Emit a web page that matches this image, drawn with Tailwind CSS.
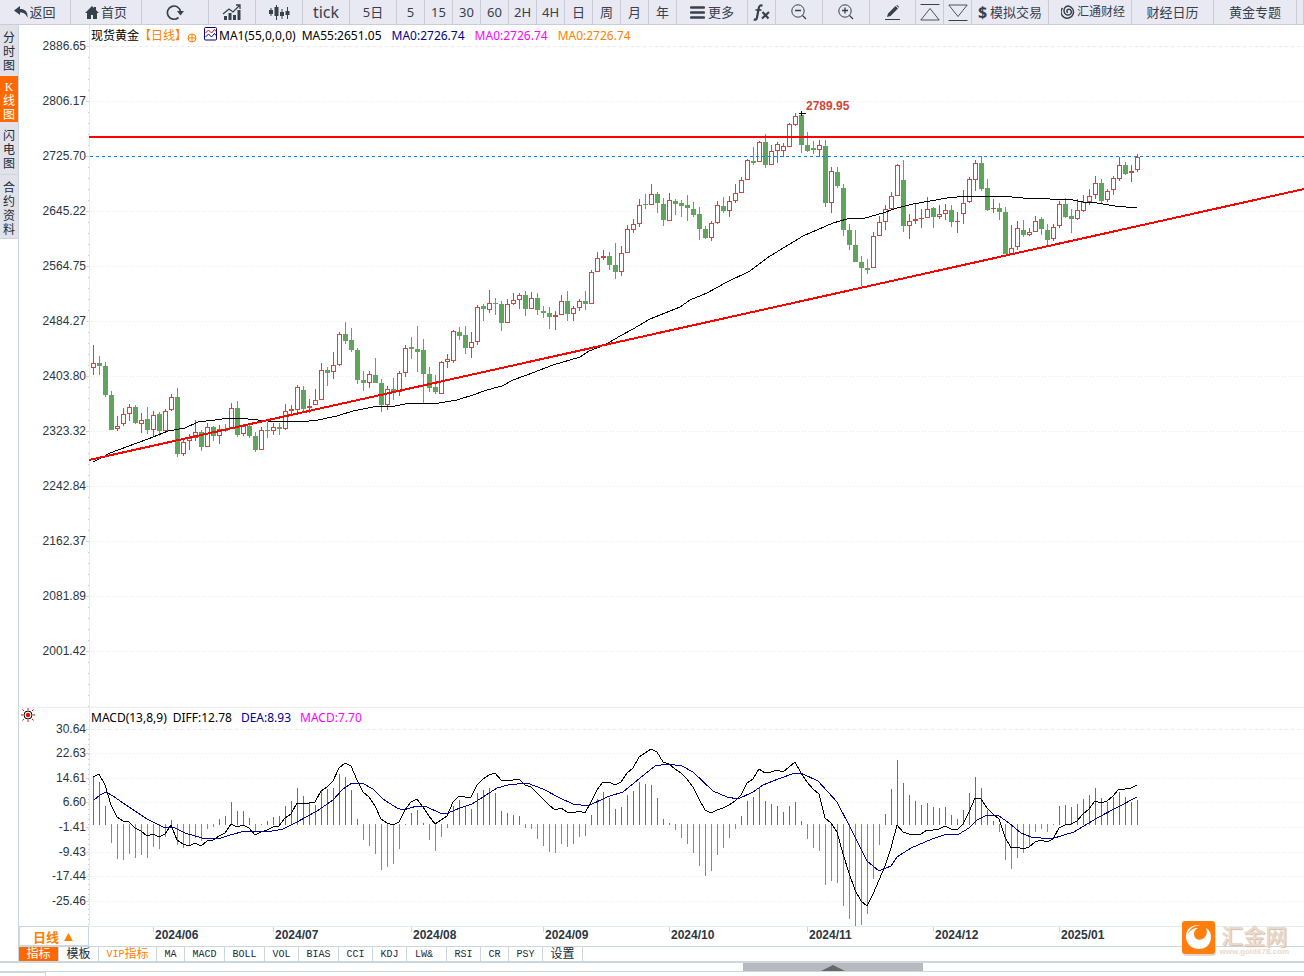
<!DOCTYPE html>
<html lang="zh-CN">
<head>
<meta charset="utf-8">
<meta name="viewport" content="width=device-width, initial-scale=1">
<title>现货黄金 日线</title>
<script src="https://cdn.jsdelivr.net/npm/@tailwindcss/browser@4"></script>
</head>
<body class="flex h-screen min-h-[600px] flex-col overflow-hidden bg-white font-['Noto_Sans','Noto_Sans_CJK_SC',sans-serif] text-[#36414d]">

<nav class="flex h-[25px] shrink-0 overflow-hidden border-b border-[#cbccd8] bg-[#e9e9f3] text-[13px] leading-6 whitespace-nowrap *:flex *:shrink-0 *:items-center *:justify-center *:border-r *:border-[#cbccd8]">
  <button class="w-[71px] gap-px">
    <svg width="14" height="12" viewBox="0 0 14 12"><path d="M0 4.500 6 0v3c5 0 8 2.500 7.500 9C12 8 10 6.500 6 6.500V9z" fill="#36414d"/></svg>返回</button>
  <button class="w-[71px] gap-[2px]">
    <svg width="14" height="13" viewBox="0 0 14 13"><path d="M7 0 0 7h2v6h4V9h2v4h4V7h2l-3-3V1H9v1z" fill="#36414d"/></svg>首页</button>
  <button class="w-[67px]" aria-label="刷新">
    <svg width="18" height="17" viewBox="0 0 18 17" fill="none"><path d="M12.500 13.500A6.600 6.600 0 1 1 14.600 8" stroke="#36414d" stroke-width="1.700"/><path d="M11 7h7l-3.500 4.500z" fill="#36414d"/></svg></button>
  <button class="w-[47px]" aria-label="走势图">
    <svg width="20" height="16" viewBox="0 0 20 16"><path d="M2 12h3v4H2zm4.500-3h3v7h-3zM11 11h3v5h-3zm4.500-5h3v10h-3z" fill="#36414d"/><path d="m1 10 6-5 4 3 7-7m-4 0h4v4" fill="none" stroke="#36414d" stroke-width="1.300"/></svg></button>
  <button class="w-[47px]" aria-label="蜡烛图">
    <svg width="21" height="15" viewBox="0 0 21 15" fill="#36414d"><path d="M0 5h4v4H0zm1.500-2h1v8h-1zM5.500 2h4v9h-4zM7 0h1v15H7zM11 7h4v4h-4zm1.500-3h1v10h-1zM16.500 6h4v4h-4zM18 2h1v12h-1z"/></svg></button>
  <button class="w-[47px] text-base">tick</button>
  <button class="w-[47px]">5日</button>
  <button class="w-7">5</button>
  <button class="w-7">15</button>
  <button class="w-7">30</button>
  <button class="w-7">60</button>
  <button class="w-7">2H</button>
  <button class="w-7">4H</button>
  <button class="w-7">日</button>
  <button class="w-7">周</button>
  <button class="w-7">月</button>
  <button class="w-7">年</button>
  <button class="w-[71px] gap-[3px]">
    <svg width="15" height="13" viewBox="0 0 15 13"><path d="M1 1.500h13M1 6.500h13M1 11.500h13" stroke="#36414d" stroke-width="2.400" stroke-linecap="round"/></svg>更多</button>
  <button class="w-7" aria-label="公式">
    <svg width="18" height="17" viewBox="0 0 18 17" fill="none" stroke="#36414d"><path d="M9.500 1.800C7.500.8 6.300 1.500 5.800 4L4 13.500C3.600 15.600 2.500 16 .8 15.400" stroke-width="2.200"/><path d="M2.500 6h6" stroke-width="1.600"/><path d="m9.500 8 6 6.500m.5-6.500-7 6.500" stroke-width="2.200"/></svg></button>
  <button class="w-[47px]" aria-label="缩小">
    <svg width="16" height="16" viewBox="0 0 16 16" fill="none" stroke="#36414d"><circle cx="7" cy="7" r="6.200"/><path d="M4 6.500h6m1.500 5 3.500 3.500" stroke-width="1.300"/></svg></button>
  <button class="w-[47px]" aria-label="放大">
    <svg width="16" height="16" viewBox="0 0 16 16" fill="none" stroke="#36414d"><circle cx="7" cy="7" r="6.200"/><path d="M4 6.500h6m-3-3v6m4.500 2 3.500 3.500" stroke-width="1.300"/></svg></button>
  <button class="w-[46px]" aria-label="画线">
    <svg width="16" height="15" viewBox="0 0 16 15" fill="#36414d"><path d="m2 12 1-3.500L10.500 1l2.500 2.500L5.500 11zM11.200.4l1-.4L14 1.800l-.4 1z"/><path d="M0 14h15v1H0z"/></svg></button>
  <button class="w-7" aria-label="主图">
    <svg width="20" height="17" viewBox="0 0 20 17" fill="none" stroke="#36414d"><path d="M.5.5h19"/><path d="M.8 16 10 4.500 19.200 16z" stroke-width=".9"/></svg></button>
  <button class="w-7" aria-label="副图">
    <svg width="20" height="17" viewBox="0 0 20 17" fill="none" stroke="#36414d"><path d="M.5 16.500h19"/><path d="M.8 1 10 12.500 19.200 1z" stroke-width=".9"/></svg></button>
  <button class="w-[77px] gap-[3px]"><span class="text-base font-bold">$</span>模拟交易</button>
  <button class="w-[83px] gap-[2px] pl-[6px] text-xs leading-6">
    <svg width="14" height="14" viewBox="0 0 14 14" fill="none" stroke="#36414d"><path d="M1.500 3A6.200 6.200 0 1 0 7.500.9C4 .8 2.500 4 3.200 7c.6 2.800 4 4 6 2.300 2.200-2 1-5.200-1.500-5-2 .2-2.500 2.500-.7 3.200" stroke-width="1.500"/></svg>汇通财经</button>
  <button class="w-[82px]">财经日历</button>
  <button class="w-[83px]">黄金专题</button>
  <span class="grow"></span>
</nav>

<main class="flex min-h-0 flex-1">
  <aside class="flex w-[19px] shrink-0 flex-col border-r border-[#ccd6de] text-xs leading-[14px] text-[#222b36]">
    <button class="flex h-[51px] flex-col items-center bg-[#e1e1ea] pt-[6px]"><span>分</span><span>时</span><span>图</span></button>
    <button class="flex h-[46px] flex-col items-center bg-[#ff6a00] pt-[4px] text-white"><span class="font-['Liberation_Serif',serif]">K</span><span>线</span><span>图</span></button>
    <button class="flex h-[53px] flex-col items-center border-b border-[#ccd6de] bg-[#e1e1ea] pt-[7px]"><span>闪</span><span>电</span><span>图</span></button>
    <button class="flex h-[64px] flex-col items-center border-b border-[#ccd6de] bg-[#e1e1ea] pt-[6px]"><span>合</span><span>约</span><span>资</span><span>料</span></button>
  </aside>

  <div class="flex min-w-0 flex-1 flex-col">
    <section class="relative min-h-0 flex-1" aria-label="K线图">
      <svg class="block h-full w-full font-['Liberation_Sans',sans-serif]"><g id="price" transform="translate(-19 -25)"></g></svg>
      <div class="absolute top-px left-[72px] flex h-5 items-center text-xs whitespace-nowrap text-black">
        <span>现货黄金</span>
        <span class="text-[#ff8000]">【日线】</span>
        <svg class="mt-[3px]" width="10" height="10" viewBox="0 0 10 10" fill="none" stroke="#ff8000"><circle cx="5" cy="5" r="4"/><path d="M1 5h8M5 1v8"/></svg>
        <svg class="mb-[4px] ml-[7px]" width="13" height="14" viewBox="0 0 13 14" fill="none"><rect x=".5" y=".5" width="12" height="12.500" rx="1" fill="#fff" stroke="#000080"/><path d="m1.500 6 3-3 3 3 3-3.500 1.500 2" stroke="#f00"/><path d="m1.500 10 3-3 3 3 3-3.500 1.500 2" stroke="#000080"/></svg>
        <span class="ml-[2px]">MA1(55,0,0,0)</span>
        <span class="ml-[6px]">MA55:2651.05</span>
        <span class="ml-[10px] text-[#000096]">MA0:2726.74</span>
        <span class="ml-[10px] text-[#ff00ff]">MA0:2726.74</span>
        <span class="ml-[10px] text-[#ff8000]">MA0:2726.74</span>
      </div>
    </section>

    <section class="relative h-[219px] shrink-0 border-t border-[#e9edf0]" aria-label="MACD">
      <svg class="block h-full w-full font-['Liberation_Sans',sans-serif]"><g id="macd" transform="translate(-19 -708)"></g></svg>
      <svg class="absolute top-0 left-[2px]" width="15" height="15" viewBox="0 0 15 15" fill="none"><circle cx="7" cy="7" r="4" stroke="#000"/><circle cx="7" cy="7" r="2.200" fill="#f00"/><path d="M7 0v2m0 10v2M0 7h2m10 0h2M1.500 1.500l1.500 1.500m8 8 1.500 1.500m0-11L11 3m-8 8-1.500 1.500" stroke="#f00"/></svg>
      <div class="absolute top-0 left-[72px] flex h-5 items-center text-xs whitespace-nowrap text-black">
        <span>MACD(13,8,9)</span>
        <span class="ml-[6px]">DIFF:12.78</span>
        <span class="ml-[9px] text-[#000096]">DEA:8.93</span>
        <span class="ml-[9px] text-[#ff00ff]">MACD:7.70</span>
      </div>
    </section>

    <div class="flex h-5 shrink-0">
      <button class="flex w-[70px] shrink-0 items-center justify-center gap-[5px] border border-[#ccd6de] pt-[2px] pr-[2px] text-[13px] font-bold leading-4 text-[#ff8000]">日线
        <svg width="9" height="8" viewBox="0 0 10 9"><path d="M5 0 10 9H0z" fill="#ff8000"/></svg></button>
      <svg class="block h-full min-w-0 flex-1 border-t border-[#e4ecf0] font-['Liberation_Sans',sans-serif]"><g id="dates" transform="translate(-89 -927)"></g></svg>
    </div>

    <div class="flex h-[15px] shrink-0 border-t border-[#ccd6de] font-['Liberation_Mono','Noto_Sans_CJK_SC',monospace] text-[10px] leading-[14px] whitespace-nowrap text-[#222b36] *:flex *:shrink-0 *:items-center *:justify-center *:border-r *:border-[#ccd6de] *:pt-[2px]">
      <button class="w-10 bg-[#ff6a00] text-xs leading-[14px] text-white">指标</button>
      <button class="w-10 text-xs leading-[14px]">模板</button>
      <button class="w-[58px] text-[#ff8000]">VIP<span class="text-xs leading-[14px]">指标</span></button>
      <button class="w-7">MA</button>
      <button class="w-10">MACD</button>
      <button class="w-10">BOLL</button>
      <button class="w-[34px]">VOL</button>
      <button class="w-10">BIAS</button>
      <button class="w-[34px]">CCI</button>
      <button class="w-[34px]">KDJ</button>
      <button class="w-10 pr-[5px]">LW&amp;</button>
      <button class="w-[34px]">RSI</button>
      <button class="w-7">CR</button>
      <button class="w-[34px]">PSY</button>
      <button class="w-10 text-xs leading-[14px]">设置</button>
    </div>
  </div>
</main>

<footer class="shrink-0">
  <div class="h-[11px] border-t-2 border-b border-[#ccd6de]">
    <button class="ml-[57%] flex h-2 w-[180px] items-end justify-center bg-[#b8b8be]" aria-label="展开">
      <svg width="24" height="6" viewBox="0 0 24 6"><path d="M12 0 24 6H0z" fill="#686868"/></svg></button>
  </div>
  <div class="h-1 w-[46px] border-t border-r border-[#ccd6de]"></div>
</footer>

<div class="absolute right-[15px] bottom-[19px] flex items-center gap-[4px]">
  <svg width="34" height="36" viewBox="0 0 34 36"><rect x="1" y="2" width="33" height="33" rx="3" fill="#e6d8cc"/><rect width="33" height="33" rx="3" fill="#ff7f0e"/><path d="M18 4.500C9 3 4 9 4 15.500 4 22.500 9.500 28 17 28s12-5.500 12-12c0-4-2-7.500-5-9 1.500 3.500 1 7-1.500 9.500-3 3-7.500 3-9.500 0-2-3.500-1-7.500 3-9.500-4-.5-8 2-10.500 6.500C7 8.500 11 4.500 18 4.500z" fill="#fff"/></svg>
  <div class="flex flex-col items-center">
    <div class="text-[22px] leading-6 font-medium text-[#ead9cd] [text-shadow:1px_1px_1px_#d3bdae]">汇金网</div>
    <div class="font-['Liberation_Sans',sans-serif] text-[8px] leading-[9px] font-bold text-[#ead9cd]">www.gold678.com</div>
  </div>
</div>

<script>
const NS = 'http://www.w3.org/2000/svg';
const RED = '#d0453c', GREEN = '#60a55c', FAR = 4000;
const X0 = 93, STEP = 6;
function add(parent, tag, attrs, text) {
  const el = document.createElementNS(NS, tag);
  for (const k in attrs) el.setAttribute(k, attrs[k]);
  if (text) el.textContent = text;
  parent.appendChild(el);
}
function rect(g, x, y, w, h, fill) { add(g, 'rect', {x, y, width: w, height: h, fill}); }
function line(g, x1, y1, x2, y2, stroke, extra) { add(g, 'line', {x1, y1, x2, y2, stroke, ...extra}); }
function curve(g, points, stroke) {
  add(g, 'polyline', {points, fill: 'none', stroke, 'stroke-width': 1, 'shape-rendering': 'crispEdges'});
}

function axis(g, ys, labels, top, bottom, minor) {
  rect(g, 89, top, 1, bottom - top, '#e2eaf1');
  for (let y = ys[0]; y < bottom; y += minor) rect(g, 88, Math.round(y), 1, 1, '#c3ccd6');
  ys.forEach((y, i) => {
    line(g, 91, y + .5, FAR, y + .5, '#ebebeb', {'stroke-dasharray': i ? '1 2' : '3 3'});
    rect(g, 86, y, 3, 1, '#ccd6de');
    add(g, 'text', {x: 86, y: y + 4, 'text-anchor': 'end', 'font-size': 12, fill: '#2b3642'}, labels[i]);
  });
}

// high, body top, body bottom, low, direction (r = up, g = down)
const candles = `345 363 368 375 r|356 363 366 375 g|362 366 395 397 g|391 395 430 430 g|416 426 429 431 r|408 414 424 426 r|404 407 414 421 r|405 407 423 424 g|413 420 424 433 r|407 419 430 434 g
411 415 430 437 r|412 414 431 436 g|409 411 431 431 r|394 397 410 411 r|388 397 454 457 g|440 442 454 456 r|434 438 441 450 r|420 432 438 441 r|430 432 447 451 g|423 427 447 447 r
426 427 436 441 g|425 429 436 444 r|424 430 431 432 g|403 408 428 428 r|401 408 435 437 g|424 426 434 436 r|423 426 436 438 g|432 436 450 452 g|427 430 450 450 r|422 430 431 438 g
423 427 431 435 r|423 427 429 435 g|404 411 429 430 r|405 409 411 415 r|385 387 410 412 r|386 390 409 412 g|399 406 408 413 r|389 400 405 405 r|363 370 400 400 r|367 370 373 386 g
352 365 372 379 r|332 334 365 366 r|322 334 341 344 g|328 340 350 352 g|348 350 380 384 g|371 380 383 391 g|371 374 383 388 r|358 375 383 383 g|379 383 405 412 g|386 389 405 410 r
378 389 392 400 g|371 373 392 396 r|345 348 373 377 r|337 347 349 359 g|326 349 352 372 g|339 350 374 404 g|367 374 388 392 g|375 387 392 394 g|361 362 394 394 r|354 359 362 368 r
330 331 361 363 r|327 332 336 340 g|326 335 348 354 g|332 342 348 358 r|305 307 342 345 r|304 306 309 321 g|290 303 310 313 r|298 303 304 315 g|301 304 323 331 g|299 304 323 323 r
293 300 304 305 r|293 295 300 309 r|291 295 309 316 g|292 298 309 309 r|293 298 310 315 g|306 311 313 318 g|307 313 317 329 g|311 315 317 330 r|295 301 315 315 r|291 301 314 321 g
306 308 314 321 r|299 301 308 311 r|291 301 304 310 g|270 272 304 304 r|252 258 272 272 r|250 256 258 260 r|252 256 265 270 g|243 265 272 279 g|246 253 272 276 r|225 229 253 253 r
219 224 230 233 r|199 205 224 227 r|194 204 205 209 g|184 194 205 205 r|192 194 203 213 g|198 204 220 226 g|193 200 221 221 r|199 201 204 215 g|200 203 206 217 g|195 205 208 221 g
202 209 215 217 g|207 214 229 240 g|226 229 238 239 g|221 223 238 241 r|201 205 223 224 r|197 206 211 213 g|196 201 211 217 r|184 193 201 203 r|177 180 193 193 r|159 160 180 180 r
147 161 163 165 g|141 142 162 162 r|134 142 165 168 g|145 151 165 165 r|142 144 151 163 r|143 146 151 157 r|123 124 147 147 r|113 116 125 126 r|112 115 145 153 g|132 145 151 152 g
141 148 150 154 g|140 145 150 157 r|140 146 203 207 g|167 171 203 213 r|167 172 186 188 g|184 188 230 236 g|224 230 245 250 g|230 245 262 262 g|256 262 268 286 g|259 268 270 274 g
232 236 268 268 r|216 222 236 236 r|205 209 222 230 r|192 196 209 209 r|164 165 196 196 r|160 180 226 232 g|214 221 226 239 r|204 219 221 224 r|209 218 219 228 r|197 209 218 218 r
207 208 217 228 g|205 214 217 219 r|204 210 214 220 r|205 210 222 227 g|212 221 222 233 r|190 203 214 224 r|177 179 202 203 r|160 163 180 191 r|156 163 189 191 g|179 188 210 211 g
199 208 209 213 r|203 208 212 220 g|207 212 254 254 g|225 248 254 254 r|221 228 247 250 r|220 230 235 237 g|228 232 235 236 r|216 221 232 232 r|217 219 229 235 g|224 230 240 245 g
224 227 239 241 r|201 204 226 228 r|198 204 217 218 g|209 216 219 233 g|199 210 219 220 r|195 202 211 212 r|189 196 202 205 r|176 183 195 199 r|179 183 201 204 g|189 191 200 202 r
176 178 190 195 r|157 165 179 181 r|162 165 174 175 g|165 171 173 182 r|154 157 170 172 r`.split(/[|\n]/);

const price = document.getElementById('price');
axis(price, [46, 101, 156, 211, 266, 321, 376, 431, 486, 541, 596, 651],
  ['2886.65', '2806.17', '2725.70', '2645.22', '2564.75', '2484.27', '2403.80', '2323.32', '2242.84', '2162.37', '2081.89', '2001.42'], 25, 707, 11);
candles.forEach((c, i) => {
  const [h, t, b, l, d] = c.split(' ');
  const x = X0 + i * STEP, color = d === 'r' ? RED : GREEN;
  rect(price, x, +h, 1, l - h, color);
  rect(price, x - 2, +t, 5, b - t, color);
  if (d === 'r' && b - t > 2) rect(price, x - 1, +t + 1, 3, b - t - 2, '#fff');
});
curve(price, '93,462 105,456 110,453 137,443 148,439 168,431 185,428 198,422 215,420 230,418 248,419 268,421 300,422 318,420 337,416 353,411 373,407 395,406 410,403 433,404 457,400 473,395 487,390 502,386 513,380 527,375 553,365 580,357 589,351 605,345 620,336 633,329 650,319 680,307 690,300 707,293 727,282 750,271 767,258 780,250 803,236 833,223 847,219 865,218 883,213 897,208 913,204 947,198 967,196 1000,196 1023,198 1050,199 1068,199 1083,202 1097,203 1115,206 1137,208', '#000');
line(price, 90, 156.5, FAR, 156.5, '#0a80ff', {'stroke-dasharray': '3 3'});
rect(price, 89, 136, FAR, 2, '#f00');
line(price, 89, 460, 3335, -264, '#f00', {'stroke-width': 2, 'shape-rendering': 'crispEdges'});
rect(price, 799, 113, 7, 1, '#000');
rect(price, 801, 111, 1, 5, '#000');
add(price, 'text', {x: 806, y: 110, 'font-size': 12, 'font-weight': 'bold', fill: RED}, '2789.95');

// end of each histogram bar; the zero line is at 824
const ZERO = 824;
const bars = [777,782,806,843,859,860,854,858,855,858,847,849,837,820,845,848,845,838,841,829,827,819,816,802,811,811,818,831,825,821,
817,816,806,801,788,796,802,805,791,789,788,774,777,790,819,840,846,854,870,867,864,849,825,813,810,823,840,851,837,828,
806,800,807,809,793,790,788,793,811,813,815,816,828,829,839,846,852,853,844,847,844,837,836,815,799,792,798,809,807,795,
791,782,784,785,798,819,823,830,838,844,853,866,876,871,855,848,838,829,816,801,797,787,801,804,806,812,806,802,821,839,
848,851,885,881,883,906,919,926,925,914,879,845,814,789,760,783,795,801,805,803,807,808,807,815,819,810,793,777,788,810,
821,832,860,869,858,853,846,832,829,832,825,806,805,807,804,799,795,788,798,802,797,792,797,802,800];
const diff = [777,774,785,805,817,821,822,828,831,836,834,837,834,825,840,844,846,843,846,841,840,836,833,824,827,825,828,835,832,830,
827,826,818,814,803,803,803,802,791,787,781,768,763,766,780,792,797,806,819,823,825,822,810,802,799,807,816,824,820,816,
802,796,797,797,785,779,775,773,780,780,780,779,785,787,793,799,805,810,808,812,813,811,813,802,790,782,782,785,782,773,
768,757,753,749,752,762,764,769,773,779,787,799,810,813,810,808,805,801,795,783,779,769,773,772,770,772,767,762,773,782,
789,794,818,823,832,854,873,890,901,906,894,880,866,848,825,832,834,834,834,830,830,829,826,829,830,824,812,798,799,808,
814,819,837,848,847,849,847,842,840,842,839,828,825,824,821,814,809,801,803,801,796,789,789,788,785];
const macd = document.getElementById('macd');
axis(macd, [729, 753, 778, 802, 827, 852, 876, 901],
  ['30.64', '22.63', '14.61', '6.60', '-1.41', '-9.43', '-17.44', '-25.46'], 708, 926, 5);
bars.forEach((y, i) => {
  const x = X0 + i * STEP;
  if (y < ZERO) rect(macd, x, y, 1, ZERO + 1 - y, RED);
  else rect(macd, x, ZERO, 1, y - ZERO, GREEN);
});
curve(macd, diff.map((y, i) => (X0 + i * STEP) + ',' + y).join(' '), '#000');
curve(macd, '94,800 100,795 106,792 113,796 123,803 147,819 163,827 173,827 185,833 202,838 218,839 230,835 245,831 267,832 283,829 297,822 317,811 333,800 343,789 352,783 362,783 373,789 383,799 397,808 403,810 417,806 427,807 440,813 448,813 460,808 472,804 483,797 497,788 508,785 527,783 543,789 560,798 573,804 588,806 607,797 623,792 640,778 655,766 667,764 682,766 693,772 713,791 727,797 738,799 753,792 763,785 778,779 795,773 803,774 818,781 837,802 850,827 867,861 879,871 891,866 897,857 911,848 932,839 947,834 959,834 969,828 977,820 987,815 999,816 1009,823 1021,833 1031,837 1051,839 1074,832 1097,818 1137,797', '#000096');

const dates = document.getElementById('dates');
[[153, '2024/06'], [273, '2024/07'], [411, '2024/08'], [543, '2024/09'], [669, '2024/10'], [807, '2024/11'], [933, '2024/12'], [1059, '2025/01']].forEach(([x, label]) => {
  rect(dates, x, 927, 1, 5, '#ccd6de');
  add(dates, 'text', {x: x + 2, y: 939, 'font-size': 12, 'font-weight': 'bold', fill: '#2b3642'}, label);
});
</script>
</body>
</html>
